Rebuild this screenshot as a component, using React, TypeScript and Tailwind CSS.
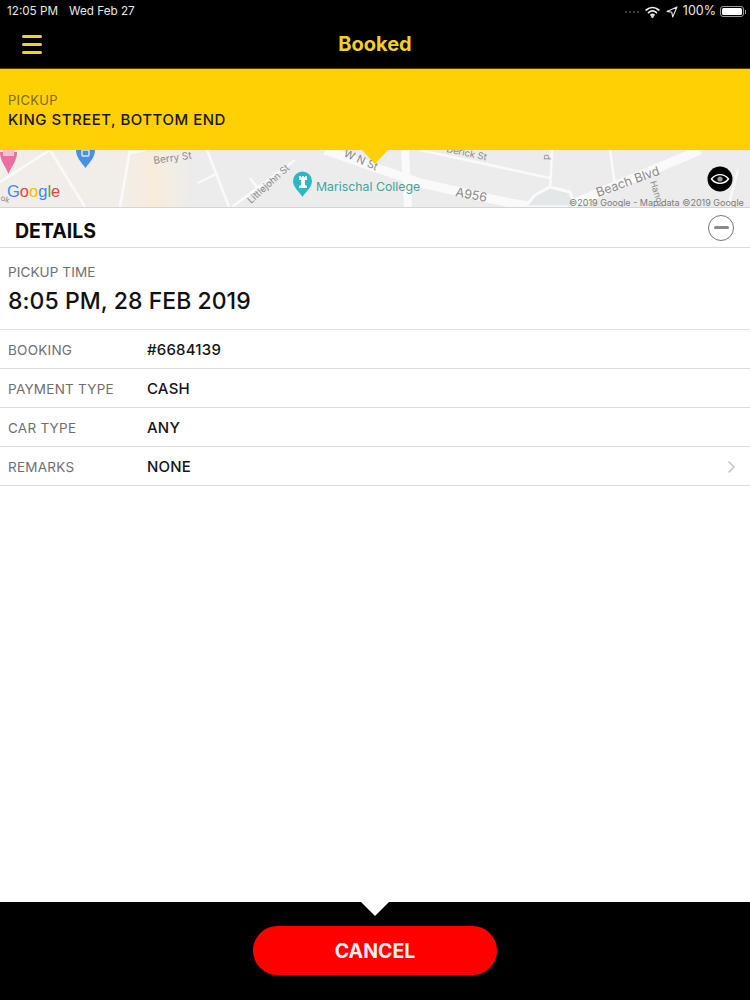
const FONT = { fontFamily: 'Inter, "Open Sans", sans-serif' };

const ROWS = [
  { label: 'BOOKING', value: '#6684139' },
  { label: 'PAYMENT TYPE', value: 'CASH' },
  { label: 'CAR TYPE', value: 'ANY' },
  { label: 'REMARKS', value: 'NONE', chevron: true },
];

function StatusIcons() {
  return (
    <div className="flex items-center text-[12.500px] text-[#e8e8e8]">
      <div className="mr-[6px] flex gap-[2px]">
        {[0, 1, 2, 3].map((i) => (
          <span key={i} className="size-[2px] rounded-full bg-[#555]" />
        ))}
      </div>
      <svg width="15" height="12" viewBox="0 0 15 12" fill="none" stroke="#f2f2f2" strokeWidth="1.7" strokeLinecap="round">
        <path d="M1.2 4C5 .7 10 .7 13.8 4" />
        <path d="M3.6 6.6c2.4-2 5.4-2 7.8 0" />
        <path d="M6 9c1-.8 2-.8 3 0" />
        <circle cx="7.5" cy="10.6" r=".5" fill="#f2f2f2" />
      </svg>
      <svg className="ml-[6px]" width="12" height="12" viewBox="0 0 12 12" fill="none" stroke="#e8e8e8" strokeWidth="1.1" strokeLinejoin="round">
        <path d="M11 1 1 5.4l4.8.9.9 4.7z" />
      </svg>
      <span className="ml-[5px]">100%</span>
      <div className="ml-[4px] flex items-center">
        <div className="h-[11px] w-[24px] rounded-[3px] border border-[#999] p-[1px]">
          <div className="h-full w-full rounded-[1.5px] bg-white" />
        </div>
        <div className="ml-[1px] h-[4px] w-[1px] bg-[#999]" />
      </div>
    </div>
  );
}

function MapStrip() {
  return (
    <svg viewBox="0 0 750 57" className="block h-full w-full" preserveAspectRatio="none">
      <defs>
        <linearGradient id="peach" x1="0" x2="1" y1="0" y2="0">
          <stop offset="0" stopColor="#f7efe3" stopOpacity="0.3" />
          <stop offset="0.5" stopColor="#f8ecda" />
          <stop offset="1" stopColor="#f7efe3" stopOpacity="0.2" />
        </linearGradient>
      </defs>
      <rect width="750" height="57" fill="#ececec" />
      <rect x="0" y="0" width="130" height="57" fill="#f1ede9" />
      <rect x="118" y="0" width="70" height="57" fill="url(#peach)" />
      <g fill="none" stroke="#fafafa" strokeWidth="2.5">
        <path d="M0 32 50 0" />
        <path d="M50 0 85 57" />
        <path d="M130 0 120 57" />
        <path d="M130 3 145 0" />
        <path d="M207 0 229 57" />
        <path d="M198 33 218 23" />
        <path d="M250 28 262 44" />
        <path d="M232 57 295 10" />
        <path d="M420 0 550 28" />
        <path d="M552 0 550 40" />
        <path d="M610 0 615 35" />
        <path d="M738 20 728 57" />
      </g>
      <path d="M325 0 420 33 510 53 535 57" fill="none" stroke="#fafafa" strokeWidth="9" />
      <path d="M405 0 408 57" fill="none" stroke="#fafafa" strokeWidth="8" />
      <path d="M570 55 700 0" fill="none" stroke="#fafafa" strokeWidth="9" />
      <path d="M535 45 550 37 570 42 575 57 525 57z" fill="#e3e7e8" stroke="#fafafa" strokeWidth="3" />
      <path d="M0 2h17c0 9-5 13-8.500 22C5 15 0 11 0 2z" fill="#ea6ea0" />
      <rect x="3" y="0" width="11" height="6" fill="#f6bed6" />
      <path d="M76 0h19c0 7-5 12-9.500 18C81 12 76 7 76 0z" fill="#4a90e2" />
      <rect x="82" y="0" width="7" height="6" rx="1" fill="none" stroke="#dce9f8" strokeWidth="1.4" />
      <path d="M293 31a9.500 9.500 0 1 1 19 0c0 6-5 9-9.500 16C298 40 293 37 293 31z" fill="#2db7c2" />
      <path d="M299 38v-2l2-1v-5h-2v-4h2v1h1v-1h2v1h1v-1h2v4h-2v5l2 1v2z" fill="#fff" />
      <g fontFamily="Inter, sans-serif" fill="#8a8a8a">
        <text x="154" y="14" fontSize="10" transform="rotate(-8 154 14)">Berry St</text>
        <text x="251" y="54" fontSize="9.500" transform="rotate(-42 251 54)">Littlejohn St</text>
        <text x="343" y="6" fontSize="11" transform="rotate(24 343 6)">W N St</text>
        <text x="446" y="2" fontSize="9.500" transform="rotate(12 446 2)">Derick St</text>
        <text x="455" y="46" fontSize="12.500" transform="rotate(11 455 46)">A956</text>
        <text x="598" y="47" fontSize="12.500" transform="rotate(-20 598 47)">Beach Blvd</text>
        <text x="650" y="32" fontSize="9" transform="rotate(72 650 32)">Hanover</text>
        <text x="551" y="10" fontSize="9" transform="rotate(-90 551 10)">P</text>
        <text x="0" y="50" fontSize="8" transform="rotate(20 0 50)">ok</text>
      </g>
      <text x="316" y="41" fontFamily="Inter, sans-serif" fontSize="12.300" fill="#3fa597">Marischal College</text>
      <g fontFamily="'Liberation Sans', sans-serif" fontSize="16.500">
        <text x="7" y="47"><tspan fill="#4285f4">G</tspan><tspan fill="#ea4335">o</tspan><tspan fill="#fbbc05">o</tspan><tspan fill="#4285f4">g</tspan><tspan fill="#34a853">l</tspan><tspan fill="#ea4335">e</tspan></text>
      </g>
      <text x="569" y="56" fontFamily="Inter, sans-serif" fontSize="9" fill="#7b7b7b">©2019 Google - Map data ©2019 Google</text>
      <circle cx="720" cy="29" r="12.500" fill="#000" />
      <path d="M711.500 29c4.500-5.800 12.500-5.800 17 0-4.500 5.800-12.500 5.800-17 0z" fill="none" stroke="#fff" strokeWidth="1.4" />
      <circle cx="720" cy="29" r="2.600" fill="#9a9a9a" />
    </svg>
  );
}

export default function App() {
  return (
    <div className="flex h-[1000px] w-[750px] flex-col bg-white" style={FONT}>
      <header className="h-[69px] shrink-0 border-b border-[#5a3c00] bg-black">
        <div className="flex h-[21px] items-center justify-between pl-[7px] pr-[4px] pt-[2px] text-[11.700px] text-[#e8e8e8]">
          <div className="flex gap-[11px]">
            <span>12:05 PM</span>
            <span>Wed Feb 27</span>
          </div>
          <StatusIcons />
        </div>
        <div className="relative flex h-[46px] items-center justify-center pb-[1px]">
          <div className="absolute left-[22px] top-[14px] flex w-[20px] flex-col gap-[5px]">
            <span className="h-[3px] rounded-full bg-[#f2d029]" />
            <span className="h-[3px] rounded-full bg-[#f2d029]" />
            <span className="h-[3px] rounded-full bg-[#f2d029]" />
          </div>
          <span className="text-[20px] font-bold text-[#f2d029]">Booked</span>
        </div>
      </header>

      <section className="flex h-[81px] shrink-0 flex-col justify-center bg-[#ffd105] pl-[8px] pt-[2px]">
        <span className="text-[13px] leading-[18px] tracking-[0.3px] text-[#7d6a16]">PICKUP</span>
        <span className="mt-[1px] text-[15px] font-medium leading-[20px] tracking-[0.5px] text-[#1a1505]">KING STREET, BOTTOM END</span>
      </section>

      <div className="relative h-[57px] shrink-0">
        <MapStrip />
        <div className="absolute left-[362px] top-0 h-[14px] w-[26px] bg-[#ffd105] [clip-path:polygon(0_0,100%_0,50%_100%)]" />
      </div>

      <main className="flex-1 border-t border-[#d4d4d4]">
        <div className="flex h-[40px] items-center justify-between border-b border-[#dcdcdc] pl-[15px] pr-[16px]">
          <span className="mt-[8px] text-[19.500px] font-bold text-[#0c0c0c]">DETAILS</span>
          <div className="flex size-[26px] items-center justify-center rounded-full border-[1.5px] border-[#777]">
            <span className="h-[3px] w-[15px] rounded-full bg-[#8a8a8a]" />
          </div>
        </div>

        <div className="flex h-[82px] flex-col border-b border-[#e2e2e2] pl-[8px] pt-[16px]">
          <span className="text-[13.500px] leading-[17px] tracking-[0.1px] text-[#6f6f6f]">PICKUP TIME</span>
          <span className="mt-[5px] text-[23px] font-medium leading-[30px] tracking-[0.05px] text-[#111]">8:05 PM, 28 FEB 2019</span>
        </div>

        {ROWS.map((row) => (
          <div key={row.label} className="flex h-[39px] items-center border-b border-[#dedede] pl-[8px] pr-[14px] pt-[2px]">
            <span className="w-[139px] text-[13.500px] tracking-[0.25px] text-[#6f6f6f]">{row.label}</span>
            <span className="flex-1 text-[15px] font-medium tracking-[0.2px] text-[#151515]">{row.value}</span>
            {row.chevron && (
              <svg width="9" height="14" viewBox="0 0 9 14" fill="none" stroke="#c4c4c4" strokeWidth="1.5">
                <path d="m1.500 1.500 5.500 5.500-5.500 5.500" />
              </svg>
            )}
          </div>
        ))}
      </main>

      <footer className="relative flex h-[98px] shrink-0 justify-center bg-black pt-[24px]">
        <div className="absolute left-[361px] top-0 h-[14px] w-[28px] bg-white [clip-path:polygon(0_0,100%_0,50%_100%)]" />
        <button type="button" className="flex h-[49px] w-[244px] items-center justify-center rounded-full bg-[#ff0000] pt-[2px] text-[19.500px] font-bold text-[#f8f0ec]">
          CANCEL
        </button>
      </footer>
    </div>
  );
}
